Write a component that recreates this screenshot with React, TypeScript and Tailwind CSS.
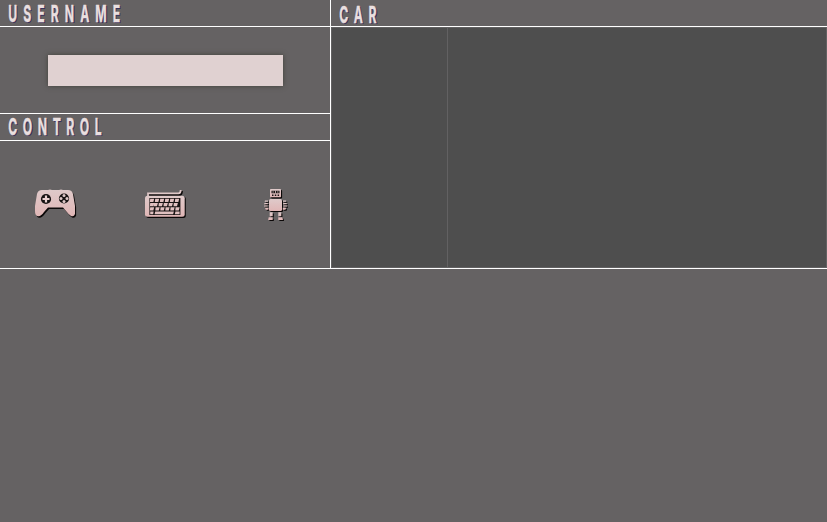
import React from "react";

function Title({ text, className = "" }: { text: string; className?: string }) {
  return (
    <h2
      className={`origin-left scale-x-[0.52] whitespace-nowrap pl-[16px] font-['Inter','Liberation_Sans',sans-serif] text-[23.5px] font-bold text-[#e9dfdf] [-webkit-text-stroke:0.4px_#e9dfdf] [text-shadow:2px_1px_0_#38315c] ${className}`}
    >
      {text}
    </h2>
  );
}

function IconGradient({ id }: { id: string }) {
  return (
    <defs>
      <linearGradient id={id} x1="0" y1="0" x2="0" y2="1">
        <stop offset="0" stopColor="#dfcaca" />
        <stop offset="1" stopColor="#e0b6b6" />
      </linearGradient>
    </defs>
  );
}

function Gamepad() {
  const body =
    "M7 1H13Q15 0 17 1H24Q26 0 28 1H33Q37 1 38 5L40 17V25Q39 28 36 27Q34 26 31 22L28 18.5H13L9 23Q6 28 2 27Q0 26 0 22V17L2 5Q3 1 7 1Z";
  return (
    <svg width="44" height="32" viewBox="0 0 44 32">
      <IconGradient id="pad" />
      <path d={body} transform="translate(1.1 1.5)" fill="#0b0808" />
      <path d={body} fill="url(#pad)" />
      <circle cx="11" cy="10" r="5.1" fill="#171313" />
      <path d="M11 6.5V13.5M7.5 10H14.5" stroke="#ead2d2" strokeWidth="2.2" />
      <circle cx="29" cy="9.5" r="5.1" fill="#171313" />
      <g fill="#dfc8c8">
        <circle cx="29" cy="6.5" r="1.5" />
        <circle cx="29" cy="12.5" r="1.5" />
        <circle cx="26" cy="9.5" r="1.5" />
        <circle cx="32" cy="9.5" r="1.5" />
      </g>
    </svg>
  );
}

function Keyboard() {
  return (
    <svg width="44" height="32" viewBox="0 0 44 32">
      <IconGradient id="keys" />
      <path d="M3.5 7V4.7H34Q36.6 4.7 36.6 1" fill="none" stroke="#0b0808" strokeWidth="2.6" />
      <path d="M3 6V3.3H33.5Q35.7 3.3 35.7 0" fill="none" stroke="#dfc8c8" strokeWidth="1.8" />
      <rect x="1.2" y="6.6" width="39.6" height="21.4" rx="2.5" fill="#0b0808" />
      <rect x="0" y="5.7" width="39.7" height="21" rx="2.5" fill="url(#keys)" />
      <rect x="4.4" y="8" width="31" height="17" fill="#171212" />
      <g fill="#e0c0c0">
        {[5.2, 10.2, 15.2, 20.2, 25.2, 30.2].map((x) => (
          <path key={x} d={`M${x} 8.8h4l-.8 3.2h-3.6z`} />
        ))}
        {[5.2, 8.8, 13.8, 18.8, 23.8, 28.8].map((x) => (
          <path key={x} d={`M${x} 13h4.1l-.9 3.2h-3.5z`} />
        ))}
        {[5.2, 10.6, 15.6, 20.6, 25.6, 30.6].map((x) => (
          <path key={x} d={`M${x} 17.2h4l-.8 3.2h-3.5z`} />
        ))}
        <path d="M5.2 21.4h3.4l-.4 2.9H5.2zM10.2 21.4h18.7l-.8 2.9H9.6zM30.4 21.4h4.2v2.9h-4.8z" />
      </g>
    </svg>
  );
}

function RobotShape({ fill }: { fill: string }) {
  return (
    <g fill={fill}>
      <rect x="6" y="0" width="11" height="8.3" rx="0.8" />
      <rect x="5" y="10" width="13" height="12" rx="1.5" />
      <path d="M1 11.5h3v1.2H0.6zM0.4 14h3.4v1.2H0.2zM0.2 16.4h3.4v1.2H0zM1 18.7h3.4v2H1.8zM19 11.5h3l.4 1.2H19zM19.2 14h3.4l.2 1.2h-3.6zM19.4 16.4h3.4l.2 1.2h-3.6zM18.8 18.7h3.4l-.8 2h-2.6z" />
      <path d="M5.7 23.3h3v4h-3zM14.3 23.3h3v4h-3zM4.7 28.3h4V31H4.2zM14.3 28.3h4l.7 2.7h-4.7z" />
    </g>
  );
}

function Robot() {
  return (
    <svg width="26" height="34" viewBox="0 0 26 34">
      <IconGradient id="bot" />
      <g transform="translate(1.1 1.1)">
        <RobotShape fill="#0b0808" />
      </g>
      <RobotShape fill="url(#bot)" />
      <path
        d="M7.5 1.8h8v2.4h-8zM8 5.5h1.5V7H8zM10.8 5.5h1.5V7h-1.5zM13.6 5.5h1.5V7h-1.5z"
        fill="#171212"
      />
      <path d="M8.5 2.5h1.2v1H8.5zM11.2 1.8h.8v2.4h-.8zM13.2 2.5h1.2v1h-1.2z" fill="#dfc8c8" />
    </svg>
  );
}

export default function App() {
  return (
    <div className="h-[522px] w-[827px] overflow-hidden bg-[#656263]">
      <div className="flex h-[269px] border-b border-white">
        <section className="flex w-[331px] flex-col border-r border-white">
          <header className="h-[27px] shrink-0 border-b border-white pt-px">
            <Title text="USERNAME" className="leading-[25px] tracking-[11.6px]" />
          </header>
          <div className="h-[86px] shrink-0 pl-12 pt-7">
            <input
              aria-label="Username"
              className="block h-[31px] w-[235px] bg-[#e0d1d1] px-2 shadow-[0_0_5px_#41403a] outline-none"
            />
          </div>
          <header className="h-7 shrink-0 border-y border-white">
            <Title text="CONTROL" className="leading-[25px] tracking-[10.6px]" />
          </header>
          <div className="flex flex-1 pt-12">
            <button className="flex h-9 w-[110px] items-start pl-[35px]">
              <Gamepad />
            </button>
            <button className="flex h-9 w-[110px] items-start pl-[35px] pt-px">
              <Keyboard />
            </button>
            <button className="flex h-9 w-[110px] items-start pl-[44px]">
              <Robot />
            </button>
          </div>
        </section>
        <section className="flex flex-1 flex-col">
          <header className="h-[27px] shrink-0 border-b border-white pt-[3px]">
            <Title text="CAR" className="leading-[23px] tracking-[11px]" />
          </header>
          <div className="flex flex-1 border border-[#626162] bg-[#4e4e4e]">
            <div className="w-[116px] border-r border-[#626162]" />
            <div className="flex-1" />
          </div>
        </section>
      </div>
    </div>
  );
}
